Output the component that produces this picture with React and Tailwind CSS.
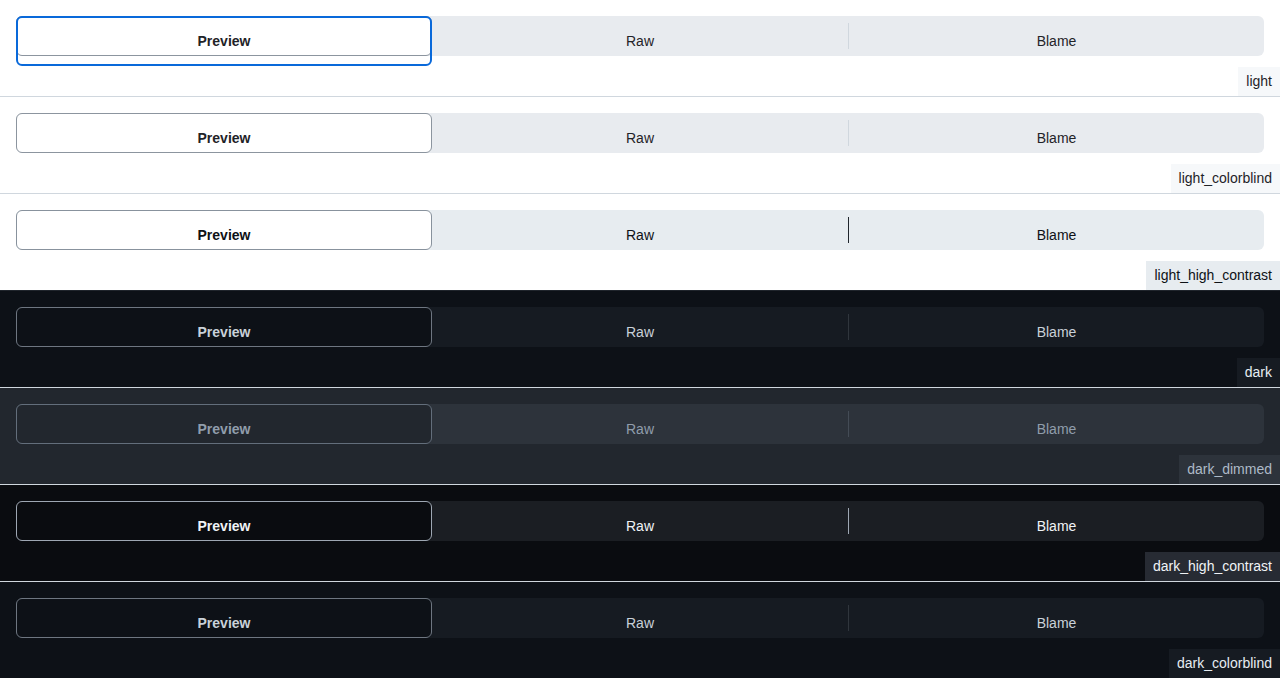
const themes = [
  {
    name: "light",
    page: "bg-white",
    track: "bg-[#e8ebef]",
    selected: "bg-white border-[#8c959f]",
    selText: "text-[#1f2328]",
    text: "text-[#1f2328]",
    divider: "bg-[#d0d7de]",
    label: "bg-[#f6f8fa] text-[#1f2328]",
    border: "border-[#d0d7de]",
    focus: true,
  },
  {
    name: "light_colorblind",
    page: "bg-white",
    track: "bg-[#e8ebef]",
    selected: "bg-white border-[#8c959f]",
    selText: "text-[#1f2328]",
    text: "text-[#1f2328]",
    divider: "bg-[#d0d7de]",
    label: "bg-[#f6f8fa] text-[#1f2328]",
    border: "border-[#d0d7de]",
  },
  {
    name: "light_high_contrast",
    page: "bg-white",
    track: "bg-[#e7ecf0]",
    selected: "bg-white border-[#88929d]",
    selText: "text-[#0e1116]",
    text: "text-[#0e1116]",
    divider: "bg-[#20252c]",
    label: "bg-[#e7ecf0] text-[#0e1116]",
    border: "border-[#20252c]",
  },
  {
    name: "dark",
    page: "bg-[#0d1117]",
    track: "bg-[#161b22]",
    selected: "bg-[#0d1117] border-[#6e7681]",
    selText: "text-[#c9d1d9]",
    text: "text-[#c9d1d9]",
    divider: "bg-[#30363d]",
    label: "bg-[#161b22] text-[#e6edf3]",
    border: "border-[#d0d7de]",
  },
  {
    name: "dark_dimmed",
    page: "bg-[#22272e]",
    track: "bg-[#2d333b]",
    selected: "bg-[#22272e] border-[#636e7b]",
    selText: "text-[#909dab]",
    text: "text-[#909dab]",
    divider: "bg-[#444c56]",
    label: "bg-[#2d333b] text-[#adbac7]",
    border: "border-[#d0d7de]",
  },
  {
    name: "dark_high_contrast",
    page: "bg-[#0a0c10]",
    track: "bg-[#1b1e23]",
    selected: "bg-[#0a0c10] border-[#9ea7b3]",
    selText: "text-[#f0f3f6]",
    text: "text-[#f0f3f6]",
    divider: "bg-[#9ea7b3]",
    label: "bg-[#272b33] text-[#f0f3f6]",
    border: "border-[#d0d7de]",
  },
  {
    name: "dark_colorblind",
    page: "bg-[#0d1117]",
    track: "bg-[#161b22]",
    selected: "bg-[#0d1117] border-[#6e7681]",
    selText: "text-[#c9d1d9]",
    text: "text-[#c9d1d9]",
    divider: "bg-[#30363d]",
    label: "bg-[#161b22] text-[#e6edf3]",
    border: "border-[#d0d7de]",
  },
];

const ThemeRow = ({ t }) => (
  <div className={`flex flex-col border-b pt-4 ${t.page} ${t.border}`}>
    {/* Segmented control */}
    <div className={`mx-4 flex h-10 rounded-[6px] ${t.track}`}>
      <div className="relative flex-1">
        <div
          className={`flex h-10 justify-center rounded-[6px] border pt-[14px] text-sm font-bold leading-5 ${t.selected} ${t.selText}`}
        >
          Preview
        </div>
        {t.focus && (
          <span className="pointer-events-none absolute left-0 top-0 h-[50px] w-full rounded-[6px] border-2 border-[#0969da]" />
        )}
      </div>
      <div className={`flex flex-1 justify-center pt-[15px] text-sm leading-5 ${t.text}`}>
        Raw
      </div>
      <div className="relative flex flex-1">
        <span className={`mt-[7px] h-[26px] w-px ${t.divider}`} />
        <div className={`flex flex-1 justify-center pt-[15px] text-sm leading-5 ${t.text}`}>
          Blame
        </div>
      </div>
    </div>

    {/* Theme label */}
    <div
      className={`mt-[11px] flex h-[29px] items-center self-end px-2 text-[14px] ${t.label}`}
    >
      {t.name}
    </div>
  </div>
);

export default function App() {
  return (
    <div className="min-h-screen bg-[#0d1117] font-['Liberation_Sans',Arial,sans-serif]">
      {themes.map((t) => (
        <ThemeRow key={t.name} t={t} />
      ))}
    </div>
  );
}
